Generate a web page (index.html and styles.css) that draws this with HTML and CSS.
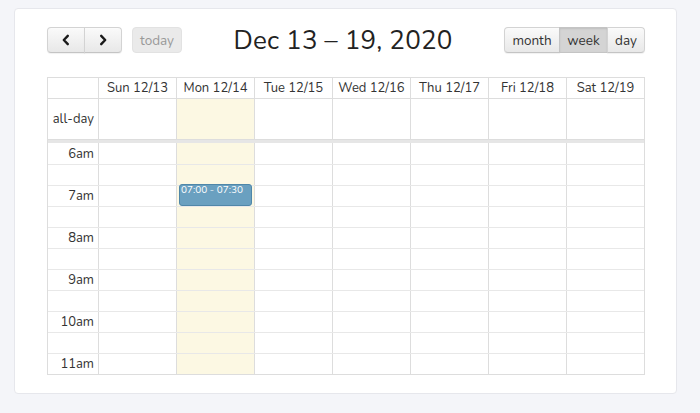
FILE: index.html
```html
<!DOCTYPE html>
<html>
<head>
<meta charset="utf-8">
<link rel="stylesheet" href="styles.css">
</head>
<body>
<div class="card">
  <div class="toolbar">
    <div class="left">
      <div class="btn-group nav">
        <button class="btn"><svg width="14" height="14" viewBox="0 0 14 14"><path d="M8.8 2.8 L4.8 7 L8.8 11.2" fill="none" stroke="#1a1a1a" stroke-width="2.4" stroke-linecap="round" stroke-linejoin="round"/></svg></button>
        <button class="btn"><svg width="14" height="14" viewBox="0 0 14 14"><path d="M5.2 2.8 L9.2 7 L5.2 11.2" fill="none" stroke="#1a1a1a" stroke-width="2.4" stroke-linecap="round" stroke-linejoin="round"/></svg></button>
      </div>
      <button class="btn btn-single disabled">today</button>
    </div>
    <h2 class="title">Dec 13 – 19, 2020</h2>
    <div class="btn-group views">
      <button class="btn">month</button>
      <button class="btn active">week</button>
      <button class="btn">day</button>
    </div>
  </div>
  <div class="cal">
    <div class="row head">
      <div class="axis"></div>
      <div class="cell">Sun 12/13</div>
      <div class="cell">Mon 12/14</div>
      <div class="cell">Tue 12/15</div>
      <div class="cell">Wed 12/16</div>
      <div class="cell">Thu 12/17</div>
      <div class="cell">Fri 12/18</div>
      <div class="cell">Sat 12/19</div>
    </div>
    <div class="row allday">
      <div class="axis">all-day</div>
      <div class="cell"></div><div class="cell today"></div><div class="cell"></div><div class="cell"></div><div class="cell"></div><div class="cell"></div><div class="cell"></div>
    </div>
    <div class="divider"></div>
    <div class="slots">
      <div class="row slot"><div class="axis">6am</div><div class="cell"></div><div class="cell today"></div><div class="cell"></div><div class="cell"></div><div class="cell"></div><div class="cell"></div><div class="cell"></div></div>
      <div class="row slot"><div class="axis"></div><div class="cell"></div><div class="cell today"></div><div class="cell"></div><div class="cell"></div><div class="cell"></div><div class="cell"></div><div class="cell"></div></div>
      <div class="row slot"><div class="axis">7am</div><div class="cell"></div><div class="cell today"><div class="event">07:00 - 07:30</div></div><div class="cell"></div><div class="cell"></div><div class="cell"></div><div class="cell"></div><div class="cell"></div></div>
      <div class="row slot"><div class="axis"></div><div class="cell"></div><div class="cell today"></div><div class="cell"></div><div class="cell"></div><div class="cell"></div><div class="cell"></div><div class="cell"></div></div>
      <div class="row slot"><div class="axis">8am</div><div class="cell"></div><div class="cell today"></div><div class="cell"></div><div class="cell"></div><div class="cell"></div><div class="cell"></div><div class="cell"></div></div>
      <div class="row slot"><div class="axis"></div><div class="cell"></div><div class="cell today"></div><div class="cell"></div><div class="cell"></div><div class="cell"></div><div class="cell"></div><div class="cell"></div></div>
      <div class="row slot"><div class="axis">9am</div><div class="cell"></div><div class="cell today"></div><div class="cell"></div><div class="cell"></div><div class="cell"></div><div class="cell"></div><div class="cell"></div></div>
      <div class="row slot"><div class="axis"></div><div class="cell"></div><div class="cell today"></div><div class="cell"></div><div class="cell"></div><div class="cell"></div><div class="cell"></div><div class="cell"></div></div>
      <div class="row slot"><div class="axis">10am</div><div class="cell"></div><div class="cell today"></div><div class="cell"></div><div class="cell"></div><div class="cell"></div><div class="cell"></div><div class="cell"></div></div>
      <div class="row slot"><div class="axis"></div><div class="cell"></div><div class="cell today"></div><div class="cell"></div><div class="cell"></div><div class="cell"></div><div class="cell"></div><div class="cell"></div></div>
      <div class="row slot"><div class="axis">11am</div><div class="cell"></div><div class="cell today"></div><div class="cell"></div><div class="cell"></div><div class="cell"></div><div class="cell"></div><div class="cell"></div></div>
    </div>
  </div>
</div>
</body>
</html>
```
FILE: styles.css
```css
* { box-sizing: border-box; }
html, body { margin: 0; padding: 0; }
body {
  background: #f4f5f9;
  font-family: "Nunito", "Lato", "Noto Sans", sans-serif;
  color: #333;
  width: 700px;
  height: 413px;
  overflow: hidden;
}
.card {
  margin: 8px 0 0 14px;
  width: 663px;
  height: 386px;
  background: #fff;
  border: 1px solid #e6e7ec;
  border-radius: 4px;
  padding: 18px 31px 0 32px;
}
.toolbar {
  display: flex;
  align-items: center;
  justify-content: space-between;
  height: 26px;
  margin-bottom: 24px;
}
.left { display: flex; align-items: center; gap: 10px; }
.title {
  margin: 0;
  font-weight: 400;
  font-size: 26px;
  color: #222;
  letter-spacing: 0.2px;
}
.btn-group { display: flex; }
.btn {
  height: 26px;
  margin: 0;
  padding: 0 8px;
  font-family: inherit;
  font-size: 13.5px;
  color: #333;
  background: linear-gradient(#fafafa, #e8e8e8);
  border: 1px solid #d3d3d3;
  border-bottom-color: #c4c4c4;
  box-shadow: inset 0 1px 0 rgba(255,255,255,.3), 0 1px 1px rgba(0,0,0,.06);
  display: flex;
  align-items: center;
  justify-content: center;
}
.btn-group .btn { border-radius: 0; }
.btn-group .btn + .btn { margin-left: -1px; }
.btn-group .btn:first-child { border-radius: 4px 0 0 4px; }
.btn-group .btn:last-child { border-radius: 0 4px 4px 0; }
.nav .btn { width: 38px; padding: 0; }
.views .btn:nth-child(1) { width: 56px; }
.views .btn:nth-child(2) { width: 49px; }
.views .btn:nth-child(3) { width: 38px; }
.btn-single { border-radius: 4px; width: 50px; padding: 0; }
.disabled { color: #999; background: #eaeaea; border-color: #e2e2e2; box-shadow: none; }
.active { background: #d4d4d4; border-color: #c4c4c4; box-shadow: inset 0 1px 2px rgba(0,0,0,.1); }
.cal {
  width: 598px;
  border: 1px solid #ddd;
}
.row {
  display: grid;
  grid-template-columns: 50px repeat(7, 1fr);
}
.cell, .axis { border-left: 1px solid #ddd; }
.row > :first-child { border-left: none; }
.head { height: 21px; border-bottom: 1px solid #ddd; }
.head .cell {
  font-size: 13px;
  display: flex;
  align-items: center;
  justify-content: center;
  color: #333;
}
.allday { height: 40px; }
.axis {
  font-size: 13px;
  text-align: right;
  padding-right: 4px;
  display: flex;
  align-items: center;
  justify-content: flex-end;
  color: #333;
}
.today { background: #fcf8e3; }
.divider { height: 4px; background: #e6e6e6; border-top: 1px solid #ddd; }
.slot { height: 21px; border-top: 1px solid #e8e8e8; }
.slots .slot:first-child { border-top: none; }
.slots .cell { position: relative; }
.event {
  position: absolute;
  left: 2px;
  right: 2px;
  top: -2px;
  height: 22px;
  background: #6aa0c0;
  border: 1px solid #4f87a9;
  border-radius: 3px;
  color: #fff;
  font-size: 10px;
  line-height: 11px;
  padding: 0 1px;
  z-index: 1;
}
```
